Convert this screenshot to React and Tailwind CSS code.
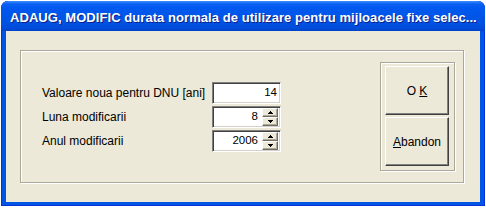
import React from 'react'

function Arrow({ up }) {
  return (
    <svg width="5" height="3" viewBox="0 0 5 3" className="block">
      {up ? <path d="M2 0h1v1h1v1h1v1H0V2h1V1h1z" fill="#000" /> : <path d="M0 0h5v1H4v1H3v1H2V2H1V1H0z" fill="#000" />}
    </svg>
  )
}

function SpinBtn({ up }) {
  return (
    <div className="h-[9px] w-[16px] flex items-center justify-center bg-[#ece9d8] border border-t-white border-l-white border-r-[#716f64] border-b-[#716f64] shadow-[inset_-1px_-1px_0_#aca899]">
      <Arrow up={up} />
    </div>
  )
}

function Field({ value, spin }) {
  return (
    <div className="w-[69px] h-[22px] bg-white flex items-center border border-t-[#808080] border-l-[#808080] border-b-white border-r-white shadow-[inset_1px_1px_0_#404040,inset_-1px_-1px_0_#d4d0c8] pl-[2px] pr-[2px] py-[1px]">
      <span className={`flex-1 text-right text-[11.5px] leading-none ${spin ? 'pr-[4px]' : 'pr-[1px]'}`}>{value}</span>
      {spin && (
        <div className="flex flex-col h-[18px] justify-between">
          <SpinBtn up />
          <SpinBtn />
        </div>
      )}
    </div>
  )
}

function Btn({ children }) {
  return (
    <button className="w-[64px] h-[49px] bg-[#ece9d8] border border-t-white border-l-white border-r-[#404040] border-b-[#404040] shadow-[inset_-1px_-1px_0_#808080] text-[12px] text-black flex items-center justify-center">
      {children}
    </button>
  )
}

export default function App() {
  const rows = [
    { label: 'Valoare noua pentru DNU [ani]', value: '14', spin: false },
    { label: 'Luna modificarii', value: '8', spin: true },
    { label: 'Anul modificarii', value: '2006', spin: true },
  ]

  return (
    <div className="w-[486px] h-[209px] bg-white pt-px pl-px font-['Liberation_Sans',Arial,sans-serif]">
      <div className="w-[484px] h-[205px] rounded-t-[7px] bg-[#0055e5] shadow-[inset_0_0_0_1px_#0831d9] flex flex-col overflow-hidden">
        {/* title bar */}
        <div className="h-[30px] shrink-0 rounded-t-[7px] bg-[linear-gradient(#3d8ffc_0px,#0a5ff0_3px,#0058ee_8px,#0054e3_20px,#004ad8_28px,#0041c8_30px)] flex items-center pl-[9px] pt-[3px]">
          <span className="text-white font-bold text-[13px] tracking-[0.06px] whitespace-nowrap [text-shadow:1px_1px_0_#0a1e8c]">
            ADAUG, MODIFIC durata normala de utilizare pentru mijloacele fixe selec...
          </span>
        </div>

        {/* client area */}
        <div className="flex-1 mx-[5px] mb-[4px] bg-[#ece9d8] pt-[19px] px-[14px]">
          <div className="w-[444px] h-[133px] border border-[#aca899] shadow-[1px_1px_0_#fff,inset_1px_1px_0_#fff] flex items-center pl-[21px] pr-[8px]">
            <div className="flex flex-col gap-[1px] text-[12px] text-black">
              {rows.map((r) => (
                <div key={r.label} className="flex items-center h-[23px]">
                  <span className="w-[170px] whitespace-nowrap">{r.label}</span>
                  <Field value={r.value} spin={r.spin} />
                </div>
              ))}
            </div>

            <div className="ml-auto w-[75px] h-[109px] border border-[#aca899] shadow-[1px_1px_0_#fff,inset_1px_1px_0_#fff] flex flex-col gap-[2px] pt-[3px] pl-[4px]">
              <Btn>
                O&nbsp;<span className="underline">K</span>
              </Btn>
              <Btn>
                <span className="underline">A</span>bandon
              </Btn>
            </div>
          </div>
        </div>
      </div>
    </div>
  )
}
